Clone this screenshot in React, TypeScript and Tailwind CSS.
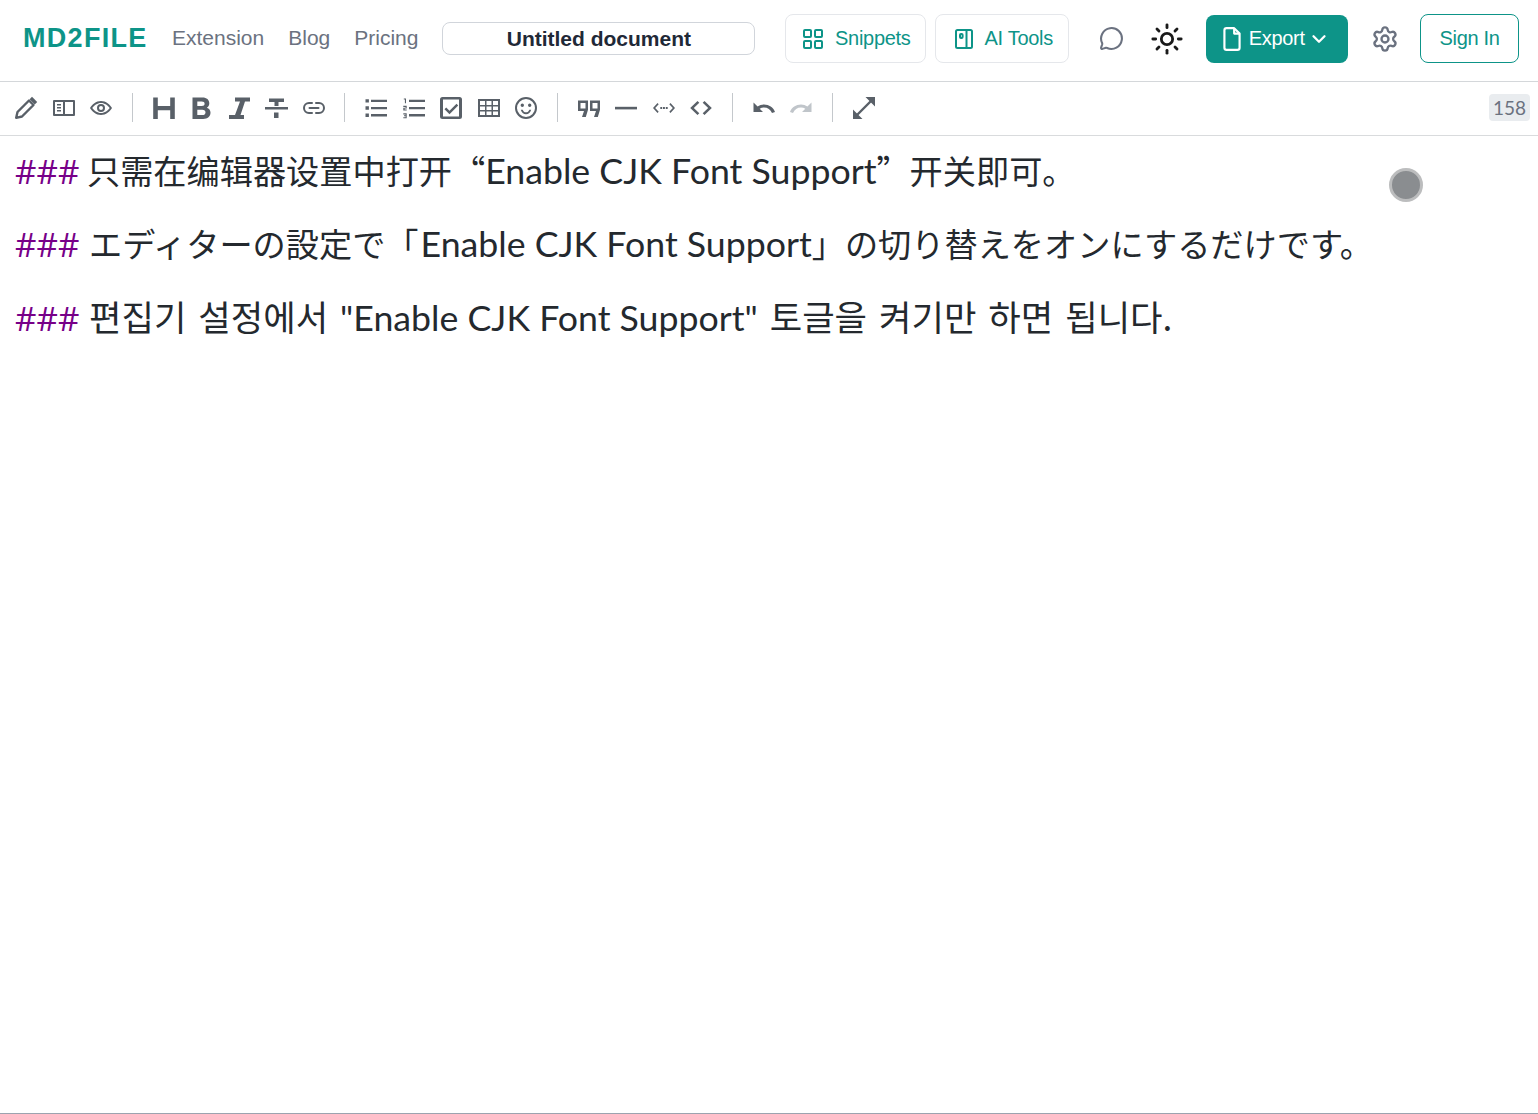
import type { ReactNode } from 'react';
import { ChevronDown, LayoutGrid, MessageCircle, Settings, Sun } from 'lucide-react';

const sans = 'font-["Liberation_Sans",Arial,sans-serif]';

function ToolIcon({ children, muted }: { children: ReactNode; muted?: boolean }) {
  return (
    <button className={`flex h-[37px] w-[37.5px] shrink-0 items-center justify-center ${muted ? 'text-[#c0c5ca]' : 'text-[#596068]'}`}>
      <svg viewBox="0 0 24 24" className="h-6 w-6" fill="currentColor">
        {children}
      </svg>
    </button>
  );
}

const Sep = () => (
  <div className="flex w-[25.1px] shrink-0 justify-center">
    <div className="h-[29px] w-px bg-[#c4c8cc]" />
  </div>
);

function Line({ children }: { children: ReactNode }) {
  return (
    <div className="h-[73px] whitespace-nowrap leading-[68px]">
      <span className="text-[#708]">###</span> {children}
    </div>
  );
}

// latin runs inside the CJK lines
const Latin = ({ children, nudge }: { children: ReactNode; nudge?: boolean }) => (
  <span className={`font-['Lato',sans-serif] text-[35.7px] [word-spacing:0] ${nudge ? 'ml-0.5' : ''}`}>{children}</span>
);

export default function App() {
  return (
    <div className={`flex h-[1114px] w-[1538px] flex-col overflow-hidden bg-white ${sans}`}>
      {/* top bar */}
      <header className="flex h-[82px] shrink-0 items-center border-b border-[#d4d7da] pb-1 pl-[23px] pr-[19px]">
        <span className="w-[124px] text-[27px] font-bold tracking-[1.3px] text-[#0d9488]">MD2FILE</span>
        <nav className="ml-[25px] mb-0.5 flex gap-6 text-[21px] text-[#6b7280]">
          <a>Extension</a>
          <a>Blog</a>
          <a>Pricing</a>
        </nav>
        <div className="ml-6 flex h-[33px] w-[313px] items-center justify-center rounded-lg border border-[#d1d5db] text-[21px] font-bold text-[#1f2937]">
          Untitled document
        </div>
        <button className="ml-[30px] flex h-[49px] w-[141px] items-center justify-center gap-[10px] rounded-lg border border-[#e5e7eb] text-[20px] tracking-[-0.3px] text-[#0d9488]">
          <LayoutGrid size={24} strokeWidth={2} />
          <span className="mb-0.5">Snippets</span>
        </button>
        <button className="ml-[9px] flex h-[49px] w-[134px] items-center justify-center gap-[9px] rounded-lg border border-[#e5e7eb] text-[20px] tracking-[-0.3px] text-[#0d9488]">
          <svg viewBox="0 0 24 24" className="h-6 w-6" fill="none" stroke="currentColor" strokeWidth="2">
            <rect x="4" y="3" width="16" height="18" rx="1.5" />
            <path d="M14.5 3v18" />
            <rect x="8" y="7" width="2.6" height="4" rx="1" />
          </svg>
          <span className="mb-0.5">AI Tools</span>
        </button>
        <MessageCircle className="ml-[30px] text-[#6b7280]" size={25} strokeWidth={2} />
        <Sun className="ml-[26px] text-[#1a1a1a]" size={34} strokeWidth={2} />
        <button className="ml-[22px] flex h-[48px] w-[142px] items-center rounded-lg bg-[#0d9488] pl-[12.5px] text-[20px] tracking-[-0.3px] text-white">
          <svg viewBox="0 0 24 24" className="mr-1 h-[26px] w-[26px]" fill="none" stroke="currentColor" strokeWidth="2" strokeLinejoin="round">
            <path d="M14 2H7a2 2 0 0 0-2 2v16a2 2 0 0 0 2 2h10a2 2 0 0 0 2-2V7z" />
            <path d="M14 2v5h5" />
          </svg>
          <span className="mb-0.5">Export</span>
          <ChevronDown className="ml-[3px]" size={22} strokeWidth={2.5} />
        </button>
        <Settings className="ml-[23px] text-[#6b7280]" size={28} strokeWidth={2} />
        <button className="ml-[21px] flex h-[49px] w-[99px] items-center justify-center rounded-lg border border-[#0d9488] pb-0.5 text-[20px] tracking-[-0.3px] text-[#0d9488]">
          Sign In
        </button>
      </header>

      {/* editor toolbar */}
      <div className="flex h-[54px] shrink-0 items-center border-b border-[#d9dbdd] pb-[2px] pl-[7.25px] pr-2">
        <ToolIcon>
          <path d="M18 .8 23.200 6 20.800 8.400 15.600 3.200z" />
          <path d="M2.200 21.800 3.500 16 15 4.500 19.500 9 8 20.500z" fill="none" stroke="currentColor" strokeWidth="2.400" strokeLinejoin="round" />
        </ToolIcon>
        <ToolIcon>
          <path fillRule="evenodd" d="M2 4h20a1 1 0 0 1 1 1v14a1 1 0 0 1-1 1H2a1 1 0 0 1-1-1V5a1 1 0 0 1 1-1zm1 2v12h8V6zm10 0v12h8V6zM5 8h4v1.500H5zm0 3h4v1.500H5zm0 3h4v1.500H5z" />
        </ToolIcon>
        <ToolIcon>
          <path fillRule="evenodd" d="M12 5c5 0 9 3.500 11 7-2 3.500-6 7-11 7S3 15.500 1 12c2-3.500 6-7 11-7zm0 2c-3.800 0-6.900 2.500-8.700 5 1.800 2.500 4.900 5 8.700 5s6.900-2.500 8.700-5C18.900 9.500 15.800 7 12 7zm0 1a4 4 0 1 1 0 8 4 4 0 0 1 0-8zm0 2a2 2 0 1 0 0 4 2 2 0 0 0 0-4z" />
        </ToolIcon>
        <Sep />
        <ToolIcon>
          <path d="M1.200 1.500h4.600v8.500h12.400V1.500h4.600v21.500h-4.600v-8.800H5.800V23H1.200z" />
        </ToolIcon>
        <ToolIcon>
          <path fillRule="evenodd" d="M3.500 1.500h10c4.200 0 6.800 2.300 6.800 5.800 0 2-1 3.600-2.500 4.400 2.300.7 3.700 2.500 3.700 4.900 0 4-2.900 6.400-7.300 6.400H3.500zm4.800 4v4.500h4.500c1.800 0 2.800-.8 2.800-2.200s-1-2.300-2.800-2.300zm0 8.300V19h5c2 0 3.200-1 3.200-2.600s-1.200-2.600-3.200-2.600z" />
        </ToolIcon>
        <ToolIcon>
          <path d="M8 1.500h15v4h-5L13.500 19H17v4H2v-4h6L13 5.500H8z" />
        </ToolIcon>
        <ToolIcon>
          <path d="M5 2.500h15v3.500h-5.500V10h-4V6h-5.500zM1 11h23v2.500H1zM10 16.500h4.500V22H10z" />
        </ToolIcon>
        <ToolIcon>
          <g fill="none" stroke="currentColor" strokeWidth="2" strokeLinecap="round">
            <path d="M10 7H7a5 5 0 0 0 0 10h3" />
            <path d="M14 7h3a5 5 0 0 1 0 10h-3" />
            <path d="M7.500 12h9" />
          </g>
        </ToolIcon>
        <Sep />
        <ToolIcon>
          <path d="M1.500 3.200h3.400v3.400H1.500zM1.500 10.300h3.400v3.400H1.500zM1.500 17.500h3.400v3.400H1.500zM7 3.800h16v2.300H7zM7 10.900h16v2.300H7zM7 18.100h16v2.300H7z" />
        </ToolIcon>
        <ToolIcon>
          <path d="M7 3.800h16v2.300H7zM7 10.900h16v2.300H7zM7 18.100h16v2.300H7zM1.800 2.500h2.200v4.700H2.900V3.500H1.800zM1.300 9.800h3.400v2.800H2.600v.8h2.100v1.100H1.300v-2.800h2.300v-.8H1.300zM1.300 17.300h3.400v5H1.300v-1.100h2.300v-.9H2v-1h1.600v-.9H1.300z" />
        </ToolIcon>
        <ToolIcon>
          <path fillRule="evenodd" d="M3.500 1h17a2.500 2.500 0 0 1 2.500 2.500v17a2.500 2.500 0 0 1-2.500 2.500h-17A2.500 2.500 0 0 1 1 20.500v-17A2.500 2.500 0 0 1 3.500 1zm.500 2.500v17h16v-17zm13.500 4.300 1.700 1.700-8.700 8.700-5-5 1.700-1.700 3.300 3.300z" />
        </ToolIcon>
        <ToolIcon>
          <path fillRule="evenodd" d="M1 3h22v18H1zm2 2v4h5V5zm6.500 0v4h5V5zM16 5v4h5V5zM3 10.500V14h5v-3.500zm6.500 0V14h5v-3.500zm6.500 0V14h5v-3.500zM3 15.500V19h5v-3.500zm6.500 0V19h5v-3.500zm6.500 0V19h5v-3.500z" />
        </ToolIcon>
        <ToolIcon>
          <path fillRule="evenodd" d="M12 1a11 11 0 1 1 0 22 11 11 0 0 1 0-22zm0 2a9 9 0 1 0 0 18 9 9 0 0 0 0-18zM8.300 7.500a1.700 1.700 0 1 1 0 3.400 1.700 1.700 0 0 1 0-3.400zm7.400 0a1.700 1.700 0 1 1 0 3.400 1.700 1.700 0 0 1 0-3.400zM6.800 13.700h1.900c.5 1.600 1.800 2.600 3.300 2.600s2.800-1 3.300-2.600h1.900c-.6 2.700-2.700 4.500-5.200 4.500s-4.600-1.800-5.200-4.500z" />
        </ToolIcon>
        <Sep />
        <ToolIcon>
          <path fillRule="evenodd" d="M1 4.500h10v9.200L8.800 21H5l2-6H1zM13 4.500h10v9.200L20.800 21H17l2-6h-6zM3.500 7v5.500h5V7zM15.500 7v5.500h5V7z" />
        </ToolIcon>
        <ToolIcon>
          <path d="M1 10.800h22v2.600H1z" />
        </ToolIcon>
        <ToolIcon>
          <path d="M5.500 7 6.700 8.200 3.200 12l3.500 3.800L5.500 17 1 12zM18.500 7 17.300 8.200l3.500 3.800-3.500 3.800 1.200 1.200L23 12zM8.300 11h1.900v2H8.300zM11 11h1.900v2H11zM13.800 11h1.900v2h-1.900z" />
        </ToolIcon>
        <ToolIcon>
          <path d="M8.500 5 10.300 6.800 4.800 12l5.500 5.200L8.500 19 1.200 12zM15.500 5 13.700 6.800l5.500 5.200-5.500 5.200 1.800 1.800 7.300-7z" />
        </ToolIcon>
        <Sep />
        <ToolIcon>
          <path d="M1.500 6.500v9.500H11L7.700 12.700c1.200-.8 2.700-1.200 4.300-1.200 3.600 0 6.600 2 8 5.500l3-1C21.300 11.300 17 8.500 12 8.500c-2.400 0-4.600.7-6.400 2.100z" />
        </ToolIcon>
        <ToolIcon muted>
          <path d="M22.500 6.500v9.500H13l3.300-3.300c-1.200-.8-2.700-1.200-4.300-1.200-3.600 0-6.600 2-8 5.500l-3-1C2.700 11.300 7 8.500 12 8.500c2.400 0 4.600.7 6.400 2.100z" />
        </ToolIcon>
        <Sep />
        <ToolIcon>
          <path d="M5 19 19 5" fill="none" stroke="currentColor" strokeWidth="2.400" />
          <path d="M13.500 1H23v9.500zM1 13.500V23h9.500z" />
        </ToolIcon>
        <div className="ml-auto flex h-[27px] w-[41px] items-center justify-center rounded bg-[#e9ecef] pt-px text-[19px] text-[#6b7280] font-['Lato',sans-serif]">
          158
        </div>
      </div>

      {/* editor */}
      <main className="relative flex-1 border-b border-[#9ca3af] pl-[15px] text-[33.2px] text-[#24292e] font-['Open_Sans','Noto_Sans_CJK_SC',sans-serif]">
        <Line>
          <span className="ml-[-1px] font-['Noto_Sans_CJK_SC',sans-serif]">
            只需在编辑器设置中打开“<Latin>Enable CJK Font Support</Latin>”开关即可。
          </span>
        </Line>
        <Line>
          <span className="ml-px font-['Noto_Sans_CJK_JP',sans-serif]">
            エディターの設定で「<Latin nudge>Enable CJK Font Support</Latin>」の切り替えをオンにするだけです。
          </span>
        </Line>
        <Line>
          <span className="ml-px text-[35.3px] [word-spacing:4px] font-['Noto_Sans_CJK_KR',sans-serif]">
            편집기 설정에서 <Latin>"Enable CJK Font Support"</Latin> 토글을 켜기만 하면 됩니다.
          </span>
        </Line>
        <div className="absolute left-[1389px] top-[32px] h-[34px] w-[34px] rounded-full border-[3px] border-[#bcbdbe] bg-[#8a8d90]" />
      </main>
    </div>
  );
}
